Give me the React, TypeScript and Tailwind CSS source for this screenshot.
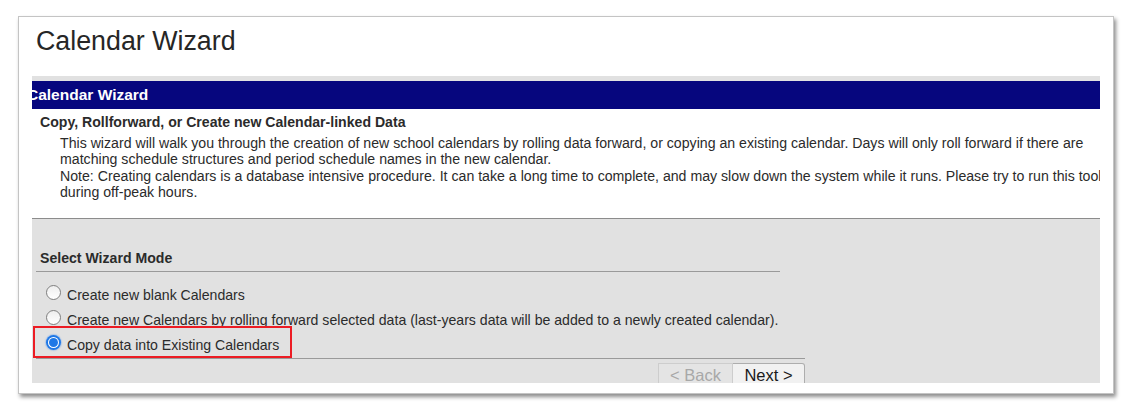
import React from "react";

function Radio({ checked = false }: { checked?: boolean }) {
    if (checked) {
        return (
            <span className="mt-[2px] flex h-[15px] w-[15px] shrink-0 items-center justify-center rounded-full bg-[#1f78e6] shadow-[0_0_1px_1px_rgba(80,150,240,0.35)]">
                <span className="flex h-[11px] w-[11px] items-center justify-center rounded-full bg-white">
                    <span className="h-[9px] w-[9px] rounded-full bg-[#1f78e6]" />
                </span>
            </span>
        );
    }
    return (
        <span className="mt-[2px] h-[15px] w-[15px] shrink-0 rounded-full border border-[#7f7f7f] bg-gradient-to-b from-[#eeeeee] to-white" />
    );
}

function ModeRow({
    label,
    checked,
    highlight,
}: {
    label: string;
    checked?: boolean;
    highlight?: boolean;
}) {
    return (
        <div className="relative flex h-[25px] items-start gap-[6px] pl-[14px]">
            <Radio checked={checked} />
            <span className="whitespace-nowrap leading-[25px]">{label}</span>
            {highlight && (
                <span className="pointer-events-none absolute left-[1px] top-[-7px] h-[32px] w-[259px] border-2 border-[#ec1c24]" />
            )}
        </div>
    );
}

export default function App() {
    return (
        <div
            className="h-[411px] w-[1135px] overflow-hidden bg-white pl-[18px] pt-[16px] text-[#2b2b2b]"
            style={{ fontFamily: '"Liberation Sans", Arial, sans-serif' }}
        >
            <div className="flex h-[378px] w-[1096px] flex-col border border-[#c4c4c4] bg-white shadow-[2px_3px_4px_rgba(0,0,0,0.45)]">
                <div className="h-[59px] shrink-0 pl-[17px] pt-[9px]">
                    <h1 className="text-[26.8px] leading-[30px] text-[#262626]">Calendar Wizard</h1>
                </div>

                <div className="ml-[13px] flex h-[307px] w-[1068px] flex-col overflow-hidden">
                    <div className="h-[5px] shrink-0 bg-[#e1e1e1]" />
                    <div className="flex h-[28px] shrink-0 items-center bg-[#06067e]">
                        <span className="-ml-[5px] whitespace-nowrap text-[15.5px] font-bold leading-[28px] text-white">
                            Calendar Wizard
                        </span>
                    </div>

                    <div className="mt-[5px] pl-[8px] text-[14.1px] font-bold leading-[16.6px]">
                        Copy, Rollforward, or Create new Calendar-linked Data
                    </div>
                    <p className="mt-[4px] whitespace-nowrap pl-[28px] text-[14.15px] leading-[16.6px]">
                        This wizard will walk you through the creation of new school calendars by rolling data forward, or copying an existing calendar. Days will only roll forward if there are
                        <br />
                        matching schedule structures and period schedule names in the new calendar.
                        <br />
                        Note: Creating calendars is a database intensive procedure. It can take a long time to complete, and may slow down the system while it runs. Please try to run this tool
                        <br />
                        during off-peak hours.
                    </p>

                    <div className="mt-[17px] h-[1px] shrink-0 bg-[#8c8c8c]" />

                    <div className="flex flex-1 flex-col bg-[#e1e1e1] text-[14.1px]">
                        <div className="pl-[8px] pt-[31px] font-bold leading-[16.6px]">Select Wizard Mode</div>
                        <div className="ml-[4px] mt-[4px] h-[1px] w-[744px] bg-[#9a9a9a]" />

                        <div className="mt-[11px] flex flex-col">
                            <ModeRow label="Create new blank Calendars" />
                            <ModeRow label="Create new Calendars by rolling forward selected data (last-years data will be added to a newly created calendar)." />
                            <ModeRow label="Copy data into Existing Calendars" checked highlight />
                        </div>
                        <div className="ml-[4px] h-[1px] w-[769px] bg-[#9a9a9a]" />

                        <div className="ml-[626px] mt-[4px] flex h-[24px] text-[16.5px] leading-[22px]">
                            <button className="w-[75px] border border-[#cdcdcd] bg-[#e4e4e4] text-[#a8a8a8]" disabled>
                                &lt; Back
                            </button>
                            <button className="w-[72px] rounded-tr-[3px] border border-l-0 border-[#adadad] bg-[#f1f1f1] text-[#1a1a1a]">
                                Next &gt;
                            </button>
                        </div>
                    </div>
                </div>
            </div>
        </div>
    );
}
